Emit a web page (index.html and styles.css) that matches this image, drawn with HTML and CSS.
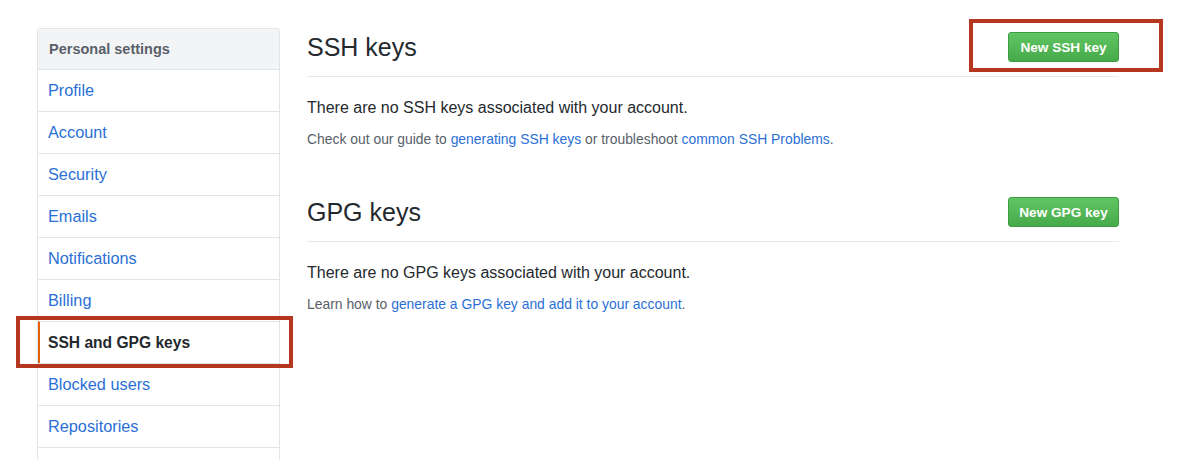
FILE: index.html
```html
<!DOCTYPE html>
<html>
<head>
<meta charset="utf-8">
<link rel="stylesheet" href="styles.css">
</head>
<body>
<div class="page">
  <nav class="menu">
    <div class="menu-head">Personal settings</div>
    <a class="menu-item" href="#">Profile</a>
    <a class="menu-item" href="#">Account</a>
    <a class="menu-item" href="#">Security</a>
    <a class="menu-item" href="#">Emails</a>
    <a class="menu-item" href="#">Notifications</a>
    <a class="menu-item" href="#">Billing</a>
    <a class="menu-item selected" href="#">SSH and GPG keys</a>
    <a class="menu-item" href="#">Blocked users</a>
    <a class="menu-item" href="#">Repositories</a>
  </nav>
  <main class="content">
    <section class="keys">
      <div class="head">
        <h2 class="title">SSH keys</h2>
        <a class="btn" href="#">New SSH key</a>
      </div>
      <p class="blank">There are no SSH keys associated with your account.</p>
      <p class="note">Check out our guide to <a href="#">generating SSH keys</a> or troubleshoot <a href="#">common SSH Problems</a>.</p>
    </section>
    <section class="keys gpg">
      <div class="head">
        <h2 class="title">GPG keys</h2>
        <a class="btn" href="#">New GPG key</a>
      </div>
      <p class="blank">There are no GPG keys associated with your account.</p>
      <p class="note">Learn how to <a href="#">generate a GPG key and add it to your account</a>.</p>
    </section>
  </main>
  <div class="mark mark-nav"></div>
  <div class="mark mark-btn"></div>
</div>
</body>
</html>
```

FILE: styles.css
```css
html, body {
  margin: 0;
  padding: 0;
  background: #ffffff;
}
body {
  font-family: "Liberation Sans", Arial, sans-serif;
  color: #24292e;
  overflow: hidden;
  height: 460px;
}
.page {
  position: relative;
  display: flex;
  align-items: flex-start;
  gap: 27px;
  padding: 28px 0 0 37px;
}
.menu {
  width: 241px;
  flex: none;
  border: 1px solid #e1e4e8;
  border-radius: 3px;
  display: flex;
  flex-direction: column;
}
.menu::after {
  content: "";
  height: 30px;
  border-top: 1px solid #e1e4e8;
}
.menu-head {
  height: 40px;
  line-height: 40px;
  padding-left: 11px;
  background: #f3f4f6;
  color: #586069;
  font-size: 14.5px;
  font-weight: 700;
  border-radius: 3px 3px 0 0;
}
.menu-item {
  height: 41px;
  line-height: 41px;
  border-top: 1px solid #e1e4e8;
  padding-left: 10px;
  font-size: 16.3px;
  color: #2b6fd6;
  text-decoration: none;
}
.menu-item.selected {
  color: #24292e;
  font-weight: 700;
  font-size: 15.6px;
  padding-left: 8px;
  border-left: 2px solid #e36209;
}
.content {
  width: 812px;
  flex: none;
}
.keys.gpg {
  margin-top: 44px;
}
.head {
  display: flex;
  justify-content: space-between;
  align-items: flex-start;
  padding: 4px 0 14px;
  border-bottom: 1px solid #e5e8ec;
}
.title {
  margin: 0;
  font-size: 25px;
  font-weight: 400;
  line-height: 30px;
  color: #24292e;
}
.btn {
  box-sizing: border-box;
  height: 30px;
  width: 111px;
  display: flex;
  align-items: center;
  justify-content: center;
  border: 1px solid #3f9b43;
  border-radius: 3px;
  background: linear-gradient(#62c563, #46aa4a);
  color: #ffffff;
  font-size: 13.6px;
  font-weight: 700;
  text-decoration: none;
}
.blank {
  margin: 19px 0 0;
  font-size: 16px;
  line-height: 24px;
  color: #24292e;
}
.note {
  margin: 9px 0 0;
  font-size: 13.9px;
  line-height: 20px;
  color: #586069;
}
.note a {
  color: #2b6fd6;
  text-decoration: none;
}
.mark {
  position: absolute;
  border: 4px solid #b5371f;
  box-sizing: border-box;
}
.mark-nav {
  left: 16px;
  top: 316px;
  width: 277px;
  height: 52px;
}
.mark-btn {
  left: 969px;
  top: 19px;
  width: 194px;
  height: 53px;
}
```
